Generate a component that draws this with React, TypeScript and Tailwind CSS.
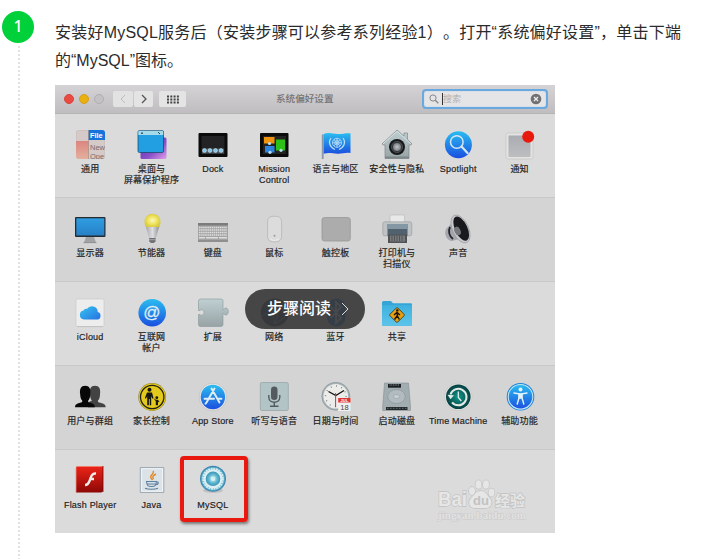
import type { ReactNode } from "react";

const defs = (
  <svg className="absolute h-0 w-0" aria-hidden="true">
    <defs>
      <linearGradient id="blue" x1="0" y1="0" x2="0" y2="1"><stop offset="0" stopColor="#2bbdf0" /><stop offset="1" stopColor="#1a4fe0" /></linearGradient>
      <linearGradient id="screen" x1="0" y1="0" x2="0" y2="1"><stop offset="0" stopColor="#2f9de2" /><stop offset="1" stopColor="#2780c6" /></linearGradient>
      <linearGradient id="steel" x1="0" y1="0" x2="0" y2="1"><stop offset="0" stopColor="#bfd0d3" /><stop offset="1" stopColor="#98a3a5" /></linearGradient>
      <linearGradient id="grey" x1="0" y1="0" x2="0" y2="1"><stop offset="0" stopColor="#aaacb2" /><stop offset="1" stopColor="#bdbec0" /></linearGradient>
      <linearGradient id="purple" x1="0" y1="0" x2="1" y2="1"><stop offset="0" stopColor="#4b2fa8" /><stop offset=".6" stopColor="#8c50c8" /><stop offset="1" stopColor="#e0a0e8" /></linearGradient>
      <linearGradient id="pink" x1="0" y1="0" x2="0" y2="1"><stop offset="0" stopColor="#dc8580" /><stop offset="1" stopColor="#e3b09c" /></linearGradient>
      <linearGradient id="flash" x1="0" y1="0" x2="0" y2="1"><stop offset="0" stopColor="#ee2418" /><stop offset="1" stopColor="#8c0806" /></linearGradient>
      <linearGradient id="cloud" x1="0" y1="0" x2="1" y2="1"><stop offset="0" stopColor="#36c4f0" /><stop offset="1" stopColor="#2672e2" /></linearGradient>
      <linearGradient id="folder" x1="0" y1="0" x2="0" y2="1"><stop offset="0" stopColor="#3fb1df" /><stop offset="1" stopColor="#5cc4ea" /></linearGradient>
      <linearGradient id="bulbBase" x1="0" y1="0" x2="1" y2="0"><stop offset="0" stopColor="#a5a5aa" /><stop offset=".5" stopColor="#dedee2" /><stop offset="1" stopColor="#8e8e93" /></linearGradient>
      <radialGradient id="bulb"><stop offset="0" stopColor="#fbf7c2" /><stop offset=".6" stopColor="#efe35c" /><stop offset="1" stopColor="#d8cb45" /></radialGradient>
      <radialGradient id="lens"><stop offset="0" stopColor="#c4c8ca" /><stop offset="1" stopColor="#777c80" /></radialGradient>
      <radialGradient id="gear"><stop offset="0" stopColor="#9fe0ee" /><stop offset="1" stopColor="#3796b8" /></radialGradient>
      <radialGradient id="teal"><stop offset="0" stopColor="#10998b" /><stop offset="1" stopColor="#073f40" /></radialGradient>
      <clipPath id="generalClip"><rect x="2" y="1" width="29" height="29" rx="3" /></clipPath>
    </defs>
  </svg>
);

const latin = { fontFamily: '"Liberation Sans", sans-serif' };

const general = (
  <g clipPath="url(#generalClip)">
    <rect x="2" y="1" width="29" height="29" rx="3" fill="#d6cac8" stroke="#b5a9a7" strokeWidth=".5" />
    <path d="M2 12h12.500v18H2z" fill="url(#pink)" />
    <path d="M14.500 1H31v10H14.500z" fill="#1573dc" />
    <path d="M14.500 1v29" stroke="#9b8583" strokeWidth=".6" />
    <text x="16" y="9.300" fontSize="7.300" fontWeight="bold" fill="#fff" style={latin}>File</text>
    <text x="16" y="20.800" fontSize="7.500" fill="#7d6967" style={latin}>New</text>
    <text x="16" y="30" fontSize="7.500" fill="#7d6967" style={latin}>Ope</text>
  </g>
);
const desktop = (
  <>
    <rect x="4.500" y="8.500" width="26" height="21.500" rx="1.500" fill="url(#purple)" />
    <rect x="2" y="1.500" width="25.500" height="22" rx="1.500" fill="#229fe2" stroke="#1b3f60" strokeWidth=".7" />
    <path d="M3.500 1.800h22.500a1.200 1.200 0 0 1 1.200 1.200v3H2.300V3a1.200 1.200 0 0 1 1.200-1.200z" fill="#a5dae8" />
    <circle cx="6" cy="4.200" r=".9" fill="#23475c" /><path d="m22 3 2 2" stroke="#23475c" />
  </>
);
const dock = (
  <>
    <rect x="1.500" y="4" width="29" height="24" rx="1" fill="#0b0b0b" />
    <rect x="4.500" y="7" width="23" height="18" fill="#232325" />
    <path d="M5 19.500h22v5H5z" fill="#4b565d" />
    {[7.5, 12.9, 18.500, 24].map((x) => <circle key={x} cx={x} cy="21.500" r="1.900" fill="#7dc3ea" stroke="#d9e7ee" strokeWidth=".6" />)}
  </>
);
const mission = (
  <>
    <rect x="2" y="4" width="28.500" height="24" rx="1" fill="#0b0b0b" />
    <path d="M5 7h23v18H5z" fill="#222" />
    <path d="M6 8h10.500v6.500H6z" fill="#f0930f" /><path d="M18 10.500h9v11h-9z" fill="#2cc118" /><path d="M7 17h9.500v6.500H7z" fill="#2c82df" />
    {[[11.500, 14.500], [23, 21.300], [12, 23.300]].map(([x, y]) => <circle key={x} cx={x} cy={y} r="1.600" fill="#b5def0" />)}
  </>
);
const flag = (
  <>
    <path d="M3.500 5c5-2 10-.2 14 0s8-1 13-.7V24c-5-.8-9 1-13 .7-5-.3-9-1.500-14 0z" fill="url(#blue)" />
    <path d="M1.800 5.500h1.800V30H1.800z" fill="#8698ab" />
    <g fill="none" stroke="#b8ddf4" strokeWidth=".9"><circle cx="17" cy="13.800" r="4.500" /><circle cx="17" cy="13.800" r="2.200" /><path d="M12.500 13.800h9M17 9.300v9M13.800 10.600l6.400 6.400M20.200 10.600 13.800 17" /><path d="M11 9c-3 4-1.500 9 4 11.500M23 9c3 4 1.500 9-4 11.500" strokeWidth="1.200" /></g>
  </>
);
const security = (
  <>
    <path d="M1 15 16 1l7 6V4h3.500v6.300L31 15l-1.500 1H28v13.500H4V16H2.500z" fill="url(#steel)" stroke="#747c7e" strokeWidth=".6" />
    <path d="M2 15 16 2.200 30 15" fill="none" stroke="#d9e0e1" strokeWidth="1" />
    <path d="M4 27.500h24v2H4z" fill="#7d8688" />
    <circle cx="16" cy="18" r="8" fill="#17181a" /><circle cx="16" cy="18" r="5.500" fill="#31353a" stroke="#6a6e70" strokeWidth=".6" /><circle cx="16" cy="18" r="4" fill="url(#lens)" />
  </>
);
const spotlight = (
  <>
    <circle cx="16.400" cy="15.700" r="13.500" fill="url(#blue)" />
    <circle cx="14.800" cy="13" r="6.300" fill="none" stroke="#d2e7f2" strokeWidth="1.500" /><path d="m19.500 17.500 6 6.500" stroke="#d2e7f2" strokeWidth="2.200" strokeLinecap="round" />
  </>
);
const notice = (
  <>
    <rect x="2" y="4" width="27" height="26" rx="2" fill="#e3e3e2" stroke="#c4c4c4" strokeWidth=".7" />
    <rect x="4.500" y="6.500" width="22" height="21.500" fill="url(#grey)" />
    <circle cx="24.200" cy="7.700" r="6" fill="#e81a0e" />
  </>
);
const display = (
  <>
    <path d="M12 24h8l2 5.500H10z" fill="#a2a3a5" /><path d="M9.500 29.300h13v.8h-13z" fill="#838385" />
    <rect x="1" y="4" width="30.500" height="20" rx="1" fill="#242b31" /><path d="M2.300 5.300h28v17.200h-28z" fill="url(#screen)" />
  </>
);
const bulb = (
  <>
    <path d="M9.500 13h14l-4 13h-6z" fill="url(#bulbBase)" /><path d="M13.200 25h6.400v3.500l-2 1.500h-2.500l-1.900-1.500z" fill="#6f7175" /><path d="M13.200 26.700h6.400" stroke="#c2c2c5" strokeWidth=".7" />
    <path d="M8.500 8.700a8 8 0 0 1 16 0c0 2.500-.5 4.200-1.500 5.300H10c-1-1.100-1.500-2.800-1.500-5.300z" fill="url(#bulb)" />
  </>
);
const keyboard = (
  <>
    <path d="M1 10h30v19H1z" fill="#a3a3a3" /><path d="M1 10h30v2.500H1z" fill="#7c7c7d" />
    {[14.500, 17, 19.500, 22].map((y) => <path key={y} d={`M2 ${y}h28`} stroke="#dfdfdf" strokeWidth="1.500" strokeDasharray="1.500 .6" />)}
    <path d="M2 24.700h6m1 0h12m1 0h8" stroke="#dedede" strokeWidth="1.500" /><path d="M1 27h30v2H1z" fill="#8f8f90" />
  </>
);
const mouse = (
  <>
    <rect x="9.600" y="3.300" width="14" height="25.500" rx="5" fill="#dcdcdc" stroke="#b5b5b5" strokeWidth=".8" /><path d="M12 25.500c2 2.500 7 2.500 9 0" stroke="#eee" strokeWidth="1" fill="none" /><circle cx="16.500" cy="22.700" r="1" fill="#9a9a9a" />
  </>
);
const trackpad = <rect x="2" y="4.500" width="28.300" height="23.500" rx="2.500" fill="#acacac" stroke="#989898" strokeWidth=".8" />;
const printer = (
  <>
    <path d="M9 2h14.500v10H9z" fill="#e8e8e8" stroke="#b0b0b0" strokeWidth=".5" />
    <rect x="1.800" y="8.800" width="29" height="14" rx="2" fill="#bfc3c5" stroke="#8b8f92" strokeWidth=".5" />
    <path d="M6.500 11h20v12h-20z" fill="#52616e" /><path d="M6.500 11h20v5h-20z" fill="#8497a4" />
    <path d="M7 21.500h19V30H7z" fill="#505255" /><path d="M9 22.500h15v6H9z" fill="#777a7c" /><path d="M11 22.500V28m2.500-5.500V28m2.500-5.500V28m2.500-5.500V28m2.500-5.500V28" stroke="#444" strokeWidth=".7" />
  </>
);
const sound = (
  <>
    <path d="M4 16 9 11l8 15-7 2C5 28 1.500 21 4 16z" fill="#a5a6ae" /><path d="M8 14c-2 4-1 9 3 12" stroke="#25262a" strokeWidth="1.800" fill="none" />
    <ellipse cx="18.500" cy="16" rx="8" ry="15" transform="rotate(-25 18.500 16)" fill="#c8c9ce" stroke="#85868b" strokeWidth=".5" />
    <ellipse cx="19.200" cy="15.600" rx="6.200" ry="13" transform="rotate(-25 19.200 15.600)" fill="#191a1d" /><ellipse cx="15.500" cy="18" rx="3" ry="4.500" transform="rotate(-25 15.500 18)" fill="#74777c" />
  </>
);
const icloud = (
  <>
    <rect x="2" y="2" width="28" height="27.700" rx="1.500" fill="#ededed" stroke="#c8c8c8" strokeWidth=".6" /><path d="M3 29.500h26" stroke="#b6b6b6" strokeWidth=".6" />
    <path d="M10 22.500a4.500 4.500 0 0 1-.5-8.900 3 3 0 0 1 3.600-1.800 5.800 5.800 0 0 1 10.600 3.300 3.800 3.800 0 0 1-.2 7.400z" fill="url(#cloud)" />
  </>
);
const internet = (
  <>
    <circle cx="16.200" cy="15.800" r="13.800" fill="url(#blue)" />
    <text x="15.800" y="20.800" textAnchor="middle" fontSize="17" fill="#dcedf5" stroke="#dcedf5" strokeWidth=".3" style={latin}>@</text>
  </>
);
const extension = <path d="M1.500 4a2 2 0 0 1 2-2H24a2 2 0 0 1 2 2v8.500h1c0-1 1-1.500 2-1.500 3 0 3 7 0 7-1 0-2-.5-2-1.500h-1v11a2 2 0 0 1-2 2H3.500a2 2 0 0 1-2-2V17.500h1.500c0 1 4 1.500 4-2s-4-3-4-2H1.500z" fill="url(#steel)" stroke="#88979a" strokeWidth=".6" />;
const network = (
  <>
    <circle cx="16.800" cy="15.500" r="14" fill="#1e2a52" /><path d="m4 20 9-10 8 2 7-5M13 10l4 17 4-15M7 8l6 2M17 27l10-7" stroke="#8d9cc2" strokeWidth=".8" fill="none" />
  </>
);
const bluetooth = (
  <>
    <rect x="7" y="1.500" width="18.500" height="28" rx="9" fill="#0a62d6" /><path d="m11 10 10 11-5 5V5l5 5-10 11" stroke="#fff" strokeWidth="1.700" fill="none" />
  </>
);
const sharing = (
  <>
    <path d="M1 5.500A1.500 1.500 0 0 1 2.500 4h7.500L12 6.300h18a1 1 0 0 1 1 1v20.400a1 1 0 0 1-1 1H2a1 1 0 0 1-1-1z" fill="#35a5d6" /><path d="M1 8.300h30v19.400a1 1 0 0 1-1 1H2a1 1 0 0 1-1-1z" fill="url(#folder)" />
    <rect x="10.500" y="12.500" width="11" height="11" rx="1" transform="rotate(45 16 18)" fill="#e6a011" stroke="#3a3422" strokeWidth=".8" />
    <circle cx="16.300" cy="13.400" r="1.200" fill="#17130a" /><path d="m16 15 .4 4 2 3.500M16 19l-2.500 3.500M13 18l3-2.500 3 2.500" stroke="#17130a" strokeWidth="1.400" fill="none" />
  </>
);
const users = (
  <>
    <path d="M14 26.300 15 21l3-1.500c-1.300-1-2-3.500-2-6-.8-5.500.8-8.800 5-8.800s5.800 3.300 5 8.800c0 2.500-.7 5-2 6v1.500c3 1.500 7.700 1 7.700 5.300z" fill="#434343" />
    <path d="M1 26.300c0-4.300 4.500-3.800 7.200-5.300v-1.500c-1.300-1-2-3.500-2-6-.8-5.500.8-8.800 5-8.800s5.800 3.300 5 8.800c0 2.500-.7 5-2 6V21c3 1.500 6.600 1 6.600 5.300z" fill="#080808" />
  </>
);
const parental = (
  <>
    <circle cx="16.200" cy="16" r="13.900" fill="#8d8432" /><circle cx="16.200" cy="16" r="13.400" fill="#e2c91b" /><circle cx="16.200" cy="16" r="11.700" fill="none" stroke="#242119" strokeWidth="1.300" />
    <circle cx="13.500" cy="8.700" r="2" fill="#171611" /><path d="M11 11.500h5l1.500 5.500-1 .7-1.300-2.500v9h-1.500V18h-.8v6.200h-1.700v-9l-1.300 2.500-1-.7z" fill="#171611" /><circle cx="20.800" cy="16.700" r="1.400" fill="#171611" /><path d="m17.300 17 2.500 1.700h2l1.700 2-.7.600-.8-.8v3.800h-2.200v-4z" fill="#171611" />
  </>
);
const appstore = (
  <>
    <circle cx="15.900" cy="16" r="13.800" fill="#e6e6e6" stroke="#b9b9b9" strokeWidth=".6" /><circle cx="15.900" cy="16" r="12.200" fill="url(#blue)" />
    <g stroke="#dfeef7" strokeWidth="1.900" strokeLinecap="round"><path d="m17.500 7.500-8 14M14.500 7.500l8 14M7.500 17.800H17M20.500 17.800h4M9 22l-.5.800" /></g>
  </>
);
const dictation = (
  <>
    <rect x="2.300" y="1.500" width="28" height="28" rx="1.500" fill="#b3c4c7" stroke="#899b9e" strokeWidth=".6" /><rect x="13" y="5.500" width="6.500" height="13.500" rx="3.200" fill="#535b60" />
    <path d="M10.800 14v2c0 7 11 7 11 0v-2M16.300 21v4M12 25.200h8.500" stroke="#535b60" strokeWidth="1.400" fill="none" />
  </>
);
const date = (
  <>
    <circle cx="15.800" cy="15.300" r="14" fill="#a5b2b5" stroke="#7b898e" strokeWidth=".5" /><circle cx="15.800" cy="15.300" r="12.300" fill="#ececea" />
    <circle cx="15.800" cy="15.300" r="10.300" fill="none" stroke="#626768" strokeWidth="1.300" strokeDasharray=".8 4.590" />
    <path d="m8.500 10.500 7.300 4 8.200-5" stroke="#111" strokeWidth="1.300" fill="none" /><path d="M15.600 12v14" stroke="#dd302d" strokeWidth="1" />
    <path d="M18.200 17h12.300v13H18.200z" fill="#f0f0f0" /><path d="M18.200 17h12.300v4.500H18.200z" fill="#dc3734" />
    <text x="24.400" y="20.800" textAnchor="middle" fontSize="4" fontWeight="bold" fill="#fff" style={latin}>JUL</text><text x="24.400" y="28.500" textAnchor="middle" fontSize="7.500" fill="#444" style={latin}>18</text>
  </>
);
const disk = (
  <>
    <path d="M3.500 2h24l2 23v4.500H1.700V25z" fill="#a2adb1" stroke="#7d878b" strokeWidth=".5" /><path d="M7 3h13v3.700H7z" fill="#1d2022" /><path d="M8.500 4h10" stroke="#87959b" strokeWidth="1" strokeDasharray="1 .7" />
    <ellipse cx="15.500" cy="15.500" rx="8.700" ry="7" fill="#b2bcc0" stroke="#8b979c" strokeWidth=".7" /><ellipse cx="15.500" cy="15.500" rx="3" ry="2" fill="#c9d0d2" stroke="#929ea2" strokeWidth=".6" />
    <path d="M5 26h21.500v3H5z" fill="#25282a" /><path d="M6 27.300h20" stroke="#66747a" strokeWidth="1" strokeDasharray="1.500 1.500" />
  </>
);
const timeMachine = (
  <>
    <circle cx="16.300" cy="15.800" r="13.800" fill="#dde1df" stroke="#b4b8b6" strokeWidth=".4" /><circle cx="16.300" cy="15.800" r="12.300" fill="url(#teal)" />
    <path d="M8.500 13.500a8.200 8.200 0 1 1 1.500 7.800" fill="none" stroke="#e1eae7" strokeWidth="2" /><path d="m5.500 13.800 6.500.5-3.500 4z" fill="#e1eae7" /><path d="M16.300 10.500v6l3 3.500" fill="none" stroke="#e1eae7" strokeWidth="1.300" />
  </>
);
const access = (
  <>
    <circle cx="16.500" cy="15.800" r="13.800" fill="#1c83d8" /><circle cx="16.500" cy="15.800" r="12.300" fill="url(#blue)" stroke="#c1e5f6" strokeWidth="1.100" />
    <circle cx="16.500" cy="8.500" r="2" fill="#e3f3fb" /><path d="m10 12 5 .8v4L13.200 23M23 12l-5 .8v4l1.800 6.200" stroke="#e3f3fb" strokeWidth="1.400" fill="none" strokeLinecap="round" /><path d="M14.500 12.200h4v5.500h-4z" fill="#e3f3fb" />
  </>
);
const flashPlayer = (
  <>
    <path d="M2 3q0-2 2-2h25v24.500q0 2-2 2H2z" fill="url(#flash)" /><path d="M2 2.500V27.500M3 1.500h26" stroke="#f49083" strokeWidth=".8" /><path d="M29 1v26" stroke="#6f0605" strokeWidth=".8" />
    <path d="M22 8.500c-4.500-.5-5 3.500-6.300 7-1 3-2.200 4.500-4.700 4.500M15.500 14h4.500" stroke="#f0ecea" strokeWidth="2.400" fill="none" />
  </>
);
const java = (
  <>
    <path d="M4.300 2.500h23.500v25H4.300z" fill="#dce3e8" stroke="#8f9ea9" strokeWidth=".8" /><path d="M5.500 3.700h21v22.600h-21z" fill="none" stroke="#fff" strokeWidth=".6" />
    <path d="M17 6c2 3-4 4-2 7l1.500 2M20 9c-4 2-3.500 3-2.500 5" stroke="#e28a25" strokeWidth="1.400" fill="none" />
    <path d="M10.500 16.500h10c-.5 4-1 5-5 5s-4.500-1-5-5zM20 17c3-1 3 2.500-.5 2.700M9 23.200c3 1.300 10 1.300 13 0M11.500 19h8" stroke="#5b7f9e" strokeWidth="1.100" fill="none" />
  </>
);
const mysql = (
  <>
    <ellipse cx="16" cy="25.500" rx="10" ry="2.500" fill="#999" opacity=".4" /><circle cx="16" cy="13.800" r="13" fill="#3f86b3" /><circle cx="16" cy="13.800" r="11.800" fill="#60b3ca" />
    <circle cx="16" cy="13.800" r="10" fill="none" stroke="#d9eef2" strokeWidth="1.800" strokeDasharray="1.900 .718" /><circle cx="16" cy="13.800" r="9.500" fill="#dceef2" /><circle cx="16" cy="13.800" r="7.300" fill="url(#gear)" /><circle cx="16" cy="13.800" r="4" fill="#8fd3e3" stroke="#5fb3cc" strokeWidth=".7" /><circle cx="16" cy="13.800" r="2.200" fill="#d6f1f4" />
  </>
);

type Item = { icon: ReactNode; label: string[]; marked?: boolean };
const rows: Item[][] = [
  [{ icon: general, label: ["通用"] }, { icon: desktop, label: ["桌面与", "屏幕保护程序"] }, { icon: dock, label: ["Dock"] }, { icon: mission, label: ["Mission", "Control"] }, { icon: flag, label: ["语言与地区"] }, { icon: security, label: ["安全性与隐私"] }, { icon: spotlight, label: ["Spotlight"] }, { icon: notice, label: ["通知"] }],
  [{ icon: display, label: ["显示器"] }, { icon: bulb, label: ["节能器"] }, { icon: keyboard, label: ["键盘"] }, { icon: mouse, label: ["鼠标"] }, { icon: trackpad, label: ["触控板"] }, { icon: printer, label: ["打印机与", "扫描仪"] }, { icon: sound, label: ["声音"] }],
  [{ icon: icloud, label: ["iCloud"] }, { icon: internet, label: ["互联网", "帐户"] }, { icon: extension, label: ["扩展"] }, { icon: network, label: ["网络"] }, { icon: bluetooth, label: ["蓝牙"] }, { icon: sharing, label: ["共享"] }],
  [{ icon: users, label: ["用户与群组"] }, { icon: parental, label: ["家长控制"] }, { icon: appstore, label: ["App Store"] }, { icon: dictation, label: ["听写与语音"] }, { icon: date, label: ["日期与时间"] }, { icon: disk, label: ["启动磁盘"] }, { icon: timeMachine, label: ["Time Machine"] }, { icon: access, label: ["辅助功能"] }],
  [{ icon: flashPlayer, label: ["Flash Player"] }, { icon: java, label: ["Java"] }, { icon: mysql, label: ["MySQL"], marked: true }],
];

function Preference({ icon, label, marked }: Item) {
  return (
    <div className="relative flex flex-col items-center">
      <svg viewBox="0 0 32 32" className="h-8 w-8 shrink-0">{icon}</svg>
      <div className="mt-[3px] text-center text-[9px] leading-[11px] tracking-[0.2px] whitespace-nowrap text-[#222] [-webkit-text-stroke:0.18px_#222]">
        {label.map((line) => <div key={line}>{line}</div>)}
      </div>
      {marked && <div className="absolute -top-[9px] -left-[2px] h-[66px] w-[68px] rounded-[4px] border-[4px] border-[#e9190f] shadow-[1px_2px_3px_#777]" />}
    </div>
  );
}

function TitleBar() {
  return (
    <div className="flex h-[29px] items-center border-b border-[#b4b4b4] bg-linear-to-b from-[#d5d3d5] to-[#bfbdbf] pr-[7px] pl-[9px]">
      <div className="flex gap-[5px]">
        <i className="size-[10px] rounded-full border border-[#d9443b] bg-[#e94a42]" />
        <i className="size-[10px] rounded-full border border-[#d8a017] bg-[#e9b010]" />
        <i className="size-[10px] rounded-full border border-[#b0aeb0] bg-[#c3c1c3]" />
      </div>
      <div className="ml-[9px] flex gap-px">
        <div className="flex h-4 w-5 items-center justify-center rounded-[2px] bg-[#e3e2e3]"><svg viewBox="0 0 8 10" className="h-[10px] w-2" fill="none" stroke="#bdbcbd"><path d="M6 1 2 5l4 4" /></svg></div>
        <div className="flex h-4 w-[19px] items-center justify-center rounded-[2px] bg-[#e5e4e5]"><svg viewBox="0 0 8 10" className="h-[10px] w-2" fill="none" stroke="#555" strokeWidth="1.300"><path d="m2 1 4 4-4 4" /></svg></div>
      </div>
      <div className="ml-[6px] flex h-4 w-[27px] items-center justify-center rounded-[2px] bg-[#e5e4e5]">
        <svg viewBox="0 0 12 9" className="h-[9px] w-3"><path d="M0 1.500h12M0 4.500h12M0 7.500h12" stroke="#444" strokeWidth="2" strokeDasharray="2 1.300" /></svg>
      </div>
      <div className="ml-[90px] text-[9.600px] leading-4 font-medium text-[#757375]">系统偏好设置</div>
      <div className="ml-auto flex h-5 w-[126px] items-center rounded-[4px] border-2 border-[#6aa9df] bg-[#e5e5e7] px-1 shadow-[inset_0_0_1px_#6aa9df]">
        <svg viewBox="0 0 10 10" className="ml-px size-[10px]" fill="none" stroke="#888"><circle cx="4" cy="4" r="3.100" /><path d="m6.300 6.300 3 3" strokeWidth="1.300" /></svg>
        <span className="ml-[3px] h-3 w-px bg-[#333]" />
        <span className="text-[9px] leading-4 text-[#b0b0b2]">搜索</span>
        <svg viewBox="0 0 12 12" className="ml-auto size-[12px]"><circle cx="6" cy="6" r="5.300" fill="#717173" /><path d="m4 4 4 4M8 4 4 8" stroke="#eee" strokeWidth="1.300" /></svg>
      </div>
    </div>
  );
}

function Watermark() {
  return (
    <svg viewBox="0 0 92 46" className="absolute right-[26px] bottom-[10px] h-[46px] w-[92px]">
      <g fill="#e6e6e6" stroke="#c2c2c2" strokeWidth="1.400" paintOrder="stroke">
        <text x="1" y="29" fontSize="20" fontWeight="bold" textLength="29" lengthAdjust="spacingAndGlyphs" style={latin}>Bai</text>
        <ellipse cx="35" cy="14" rx="3" ry="4" /><ellipse cx="41.500" cy="7.500" rx="3" ry="4.300" /><ellipse cx="49" cy="7.500" rx="3" ry="4.300" /><ellipse cx="54.500" cy="15.500" rx="3" ry="4" />
        <path d="M44 14c5 0 5 3 8 6 5 5 2 11-3 11H38c-6 0-8-6-3-11 3-3 4-6 9-6z" />
        <text x="58" y="28.500" fontSize="15" fontWeight="bold" textLength="30" style={{ fontFamily: '"Noto Sans CJK SC", sans-serif' }}>经验</text>
        <text x="1" y="42" fontSize="11" fontWeight="bold" textLength="88" stroke="#cacaca" strokeWidth="1" fill="#e2e2e2" style={{ fontFamily: '"Liberation Serif", serif' }}>jingyan.baidu.com</text>
      </g>
      <text x="44" y="28" textAnchor="middle" fontSize="13" fontWeight="bold" fill="#c2c2c2" style={latin}>du</text>
    </svg>
  );
}

export default function App() {
  return (
    <main className="flex h-[559px] w-[708px] overflow-hidden bg-white font-['Liberation_Sans','Noto_Sans_CJK_SC',sans-serif]">
      {defs}
      <aside className="flex w-[55px] shrink-0 flex-col pt-[11px] pl-[2px]">
        <div className="flex size-8 shrink-0 items-center justify-center rounded-full bg-[#00d039] pb-[2px] font-['Noto_Sans',sans-serif] text-base font-medium text-white">1</div>
        <div className="mt-[3px] ml-4 w-0.5 flex-1 bg-[repeating-linear-gradient(to_bottom,#e1e1e1_0_2px,transparent_2px_4px)]" />
      </aside>
      <article className="pt-[19px]">
        <p className="text-base leading-7 whitespace-nowrap text-[#2b2b2b] [text-spacing-trim:space-all]">
          <span className="tracking-[0.22px]">安装好MySQL服务后（安装步骤可以参考系列经验1）。打开“系统偏好设置”，单击下端</span>
          <br />的“MySQL”图标。
        </p>
        <section className="relative mt-[10px] h-[448px] w-[500px] overflow-hidden bg-[#dbdbdb]">
          <TitleBar />
          {rows.map((row, i) => (
            <div key={i} className={`grid h-[84px] grid-cols-[repeat(8,61.35px)] border-b pt-[15px] pl-[4.5px] ${i % 2 ? "bg-[#d4d4d4]" : "bg-[#dbdbdb]"} ${i === 4 ? "border-transparent" : "border-[#c9c9c9]"}`}>
              {row.map((item) => <Preference key={item.label[0]} {...item} />)}
            </div>
          ))}
          <Watermark />
          <div className="absolute top-[204px] left-[190px] flex h-10 w-[120px] items-center rounded-full bg-[#393939]/92 pl-[22px] text-base font-medium text-white">
            步骤阅读
            <svg viewBox="0 0 8 14" className="ml-[10px] h-[14px] w-2" fill="none" stroke="#ddd"><path d="m1 1 6 6-6 6" /></svg>
          </div>
        </section>
      </article>
    </main>
  );
}
